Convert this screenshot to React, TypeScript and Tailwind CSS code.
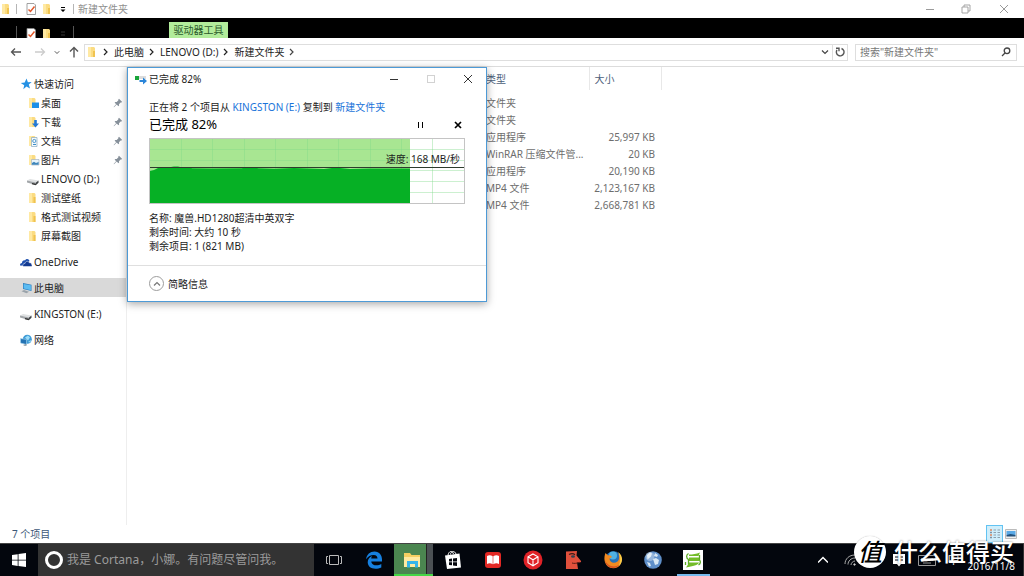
import type { ReactNode } from 'react'

const quickAccess = [
  { label: '桌面', icon: 'desktop', pinned: true },
  { label: '下载', icon: 'download', pinned: true },
  { label: '文档', icon: 'document', pinned: true },
  { label: '图片', icon: 'picture', pinned: true },
  { label: 'LENOVO (D:)', icon: 'drive', pinned: false },
  { label: '测试壁纸', icon: 'folder', pinned: false },
  { label: '格式测试视频', icon: 'folder', pinned: false },
  { label: '屏幕截图', icon: 'folder', pinned: false },
]

const places = [
  { label: 'OneDrive', icon: 'cloud', active: false },
  { label: '此电脑', icon: 'pc', active: true },
  { label: 'KINGSTON (E:)', icon: 'drive', active: false },
  { label: '网络', icon: 'network', active: false },
]

const files = [
  { type: '文件夹', size: '' },
  { type: '文件夹', size: '' },
  { type: '应用程序', size: '25,997 KB' },
  { type: 'WinRAR 压缩文件管...', size: '20 KB' },
  { type: '应用程序', size: '20,190 KB' },
  { type: 'MP4 文件', size: '2,123,167 KB' },
  { type: 'MP4 文件', size: '2,668,781 KB' },
]

const crumbs = ['此电脑', 'LENOVO (D:)', '新建文件夹']

function Folder() {
  return (
    <svg viewBox="0 0 12 12" className="h-3 w-3 shrink-0">
      <path d="M2 1h6l1 1v9H2z" fill="#fbdc82" />
      <path d="M2 1h3v10H2z" fill="#ffe9a3" />
      <path d="M7 5h2v6H7z" fill="#f0c350" />
    </svg>
  )
}

function CheckPage() {
  return (
    <svg viewBox="0 0 12 12" className="h-3 w-3 shrink-0">
      <path d="M2 .5h7l1.500 1.500v9.500H2z" fill="#fff" stroke="#8a8a8a" strokeWidth=".8" />
      <path d="M3.500 6.500l2 2 4-5" fill="none" stroke="#e2582a" strokeWidth="1.500" />
    </svg>
  )
}

function Chevron({ className = 'h-2 w-2', d = 'M2 1l3 3-3 3' }: { className?: string; d?: string }) {
  return (
    <svg viewBox="0 0 8 8" className={`shrink-0 ${className}`} fill="none" stroke="currentColor" strokeWidth="1.200">
      <path d={d} />
    </svg>
  )
}

function Pin() {
  return (
    <svg viewBox="0 0 10 10" className="h-2.5 w-2.5 shrink-0" fill="#87919b">
      <path d="M6 .8L9.200 4l-1 .6-.6-.1L6 6.200l.1 1.300-.7.8-1.700-1.700L1 9.300l-.4-.3 2.500-2.800L1.600 4.500l.8-.6 1.300.1L5.400 2.300l-.1-.8z" />
    </svg>
  )
}

function PlaceIcon({ name }: { name: string }) {
  const overlay: Record<string, ReactNode> = {
    desktop: <path d="M5 5.500h7V11H5z" fill="#1c8fe8" />,
    download: <path d="M7.200 4h2.600v3.500H12L8.500 11.500 5 7.500h2.200z" fill="#2379d6" />,
    document: (
      <g>
        <path d="M4.500 2.500H10v9H4.500z" fill="#f5fafd" stroke="#8aa9bf" strokeWidth=".7" />
        <circle cx="7.300" cy="6" r="1.600" fill="none" stroke="#3d8fc9" strokeWidth=".9" />
        <path d="M6 9.500h3" stroke="#3d8fc9" />
      </g>
    ),
    picture: (
      <g>
        <path d="M4.500 5.500H12V11H4.500z" fill="#e8f4fb" stroke="#9ab" strokeWidth=".6" />
        <path d="M5 9l2-1.200L9 9l2.600-1v2.700H5z" fill="#3f86ba" />
      </g>
    ),
  }
  return (
    <svg viewBox="0 0 12 12" className="h-3 w-3 shrink-0 overflow-visible">
      {(name === 'folder' || overlay[name]) && (
        <g>
          <path d="M2 1h5.500l1 1v9H2z" fill="#fbdc82" />
          <path d="M2 1h3v10H2z" fill="#ffe9a3" />
        </g>
      )}
      {name === 'folder' && <path d="M6.500 5h2v6h-2z" fill="#f0c350" />}
      {overlay[name]}
      {name === 'star' && <path d="M6.500.5l1.400 3.700 3.800-.2-2.900 2.600 1.200 4-3.500-2-3.200 2.600.9-4L.8 5l3.900-.6z" fill="#2591e4" />}
      {name === 'drive' && (
        <g>
          <path d="M0 7.500l3-1.500 8.500 1.500L9 9.500z" fill="#dfe1e2" />
          <path d="M0 7.500l9 2V12L0 9.500z" fill="#a2a6a9" />
          <path d="M9 9.500l2.500-2v2.300L9 12z" fill="#3e4245" />
          <path d="M5 10.600l4 .9" stroke="#333" strokeWidth="1.300" />
        </g>
      )}
      {name === 'cloud' && (
        <g>
          <path d="M0 9.500C-.2 7.800 1 7 2 7c0-1.800 1.500-3 3-2.600C6 2.200 9 2.400 9.500 5L5 9.800z" fill="#1d4fae" />
          <path d="M3.200 10.500C2 9 3.500 7.200 5 7.500 5.300 5 8.400 4.500 9.400 6.800c1.500-.3 2.200.6 2.100 1.500 1 .5.700 2.200-.3 2.200z" fill="#123a91" stroke="#fff" strokeWidth=".5" />
        </g>
      )}
      {name === 'pc' && (
        <g>
          <path d="M3 1l8.500 1.700V9L3 7z" fill="#2d7fc0" />
          <path d="M3.700 1.900l7.200 1.400v4.900L3.700 6.500z" fill="#5cbcf2" />
          <path d="M1.500 9.300l2.500-1.200 5 1.600-2.500 1.500z" fill="#9aa3aa" />
        </g>
      )}
      {name === 'network' && (
        <g>
          <circle cx="7.300" cy="5.200" r="4.500" fill="#3e9bd6" />
          <path d="M5 3.500l3-2 2 2-2 3zM8 8l3-2-.5 2.500z" fill="#9bdcf8" />
          <path d="M.5 4.500l6 1v5l-6-1.500z" fill="#2473b4" stroke="#a9d7ef" strokeWidth=".6" />
          <path d="M3 11l3-1 1 1.200-2 .8z" fill="#8c98a1" />
        </g>
      )}
    </svg>
  )
}

function TitleBar() {
  return (
    <header>
      <div className="flex h-[18px] items-center bg-white text-[#8f8f8f]">
        <Folder />
        <span className="ml-1 h-2.5 w-px bg-[#b5b5b5]" />
        <div className="ml-2 flex items-center gap-1">
          <CheckPage />
          <Folder />
        </div>
        <svg viewBox="0 0 8 8" className="ml-1.5 h-2 w-2 text-black">
          <path d="M2 2h4v1H2zM1.500 4.500h5L4 7z" fill="currentColor" />
        </svg>
        <span className="mr-1 ml-1.5 h-2.5 w-px bg-[#b5b5b5]" />
        <h1>新建文件夹</h1>
        <div className="ml-auto flex">
          <button aria-label="最小化" className="flex h-[18px] w-9 items-center justify-center">
            <span className="h-px w-2 bg-[#9b9b9b]" />
          </button>
          <button aria-label="还原" className="flex h-[18px] w-9 items-center justify-center">
            <svg viewBox="0 0 10 10" className="h-2.5 w-2.5" fill="none" stroke="#9b9b9b" strokeWidth=".9">
              <path d="M1 3h6v6H1zM3 3V1h6v6H7" />
            </svg>
          </button>
          <button aria-label="关闭" className="flex h-[18px] w-10 items-center justify-center">
            <svg viewBox="0 0 10 10" className="h-2.5 w-2.5" stroke="#8d8d8d" strokeWidth=".9">
              <path d="M1 1l8 8M9 1L1 9" />
            </svg>
          </button>
        </div>
      </div>
      <div className="flex h-5 items-end overflow-hidden bg-black">
        <span className="ml-4 h-3 w-px bg-[#555]" />
        <div className="ml-2 flex h-2.5 gap-1">
          <CheckPage />
          <Folder />
        </div>
        <svg viewBox="0 0 8 8" className="ml-1.5 h-2 w-2">
          <path d="M2 2h4M2 5h4" stroke="#333" />
        </svg>
        <span className="ml-1.5 h-3 w-px bg-[#555]" />
        <button className="ml-[95px] h-4 w-[59px] bg-[#b2ec9b] text-[#2c5a2c]">驱动器工具</button>
      </div>
    </header>
  )
}

function AddressBar() {
  return (
    <nav className="flex h-[29px] items-center border-b border-[#dcdcdc] bg-white pr-[7px] pl-2.5 text-[#444]">
      <button aria-label="后退">
        <svg viewBox="0 0 12 12" className="h-3 w-3" fill="none" stroke="#555" strokeWidth="1.300">
          <path d="M11 6H1.500M5 2.500L1.500 6 5 9.500" />
        </svg>
      </button>
      <button aria-label="前进" className="ml-3">
        <svg viewBox="0 0 12 12" className="h-3 w-3" fill="none" stroke="#ccc" strokeWidth="1.300">
          <path d="M1 6h9.500M7 2.500L10.500 6 7 9.500" />
        </svg>
      </button>
      <button aria-label="最近浏览的位置" className="ml-2">
        <Chevron className="h-1.5 w-1.5" d="M1 3l3 3 3-3" />
      </button>
      <button aria-label="上移" className="ml-2">
        <svg viewBox="0 0 12 12" className="h-3 w-3" fill="none" stroke="#555" strokeWidth="1.400">
          <path d="M6 11.500V1.500M2 5.500l4-4 4 4" />
        </svg>
      </button>
      <div className="ml-1 flex h-[17px] flex-1 items-center border border-[#dedede] pl-px">
        <Folder />
        <ol className="flex items-center text-[#222]">
          {crumbs.map((crumb) => (
            <li key={crumb} className="flex items-center">
              <Chevron className="mx-1 h-2 w-2" />
              <a href="#">{crumb}</a>
            </li>
          ))}
        </ol>
        <Chevron className="mx-1 h-2 w-2" />
        <button aria-label="历史记录" className="mr-[3px] ml-auto">
          <Chevron className="h-2 w-2" d="M1 2.500l3 3 3-3" />
        </button>
        <button aria-label="刷新" className="flex h-full w-[15px] items-center justify-center border-l border-[#dedede]">
          <svg viewBox="0 0 10 10" className="h-2.5 w-2.5" fill="none" stroke="#555" strokeWidth="1.400">
            <path d="M6.500 1.500a3.800 3.800 0 1 1-4.500 1.500M1 1.200h3v3" />
          </svg>
        </button>
      </div>
      <label className="ml-[7px] flex h-[17px] w-[162px] items-center border border-[#dedede] px-1">
        <input
          aria-label="搜索"
          placeholder='搜索"新建文件夹"'
          className="min-w-0 flex-1 bg-transparent outline-none placeholder:text-[#777]"
        />
        <svg viewBox="0 0 10 10" className="mr-px h-2.5 w-2.5" fill="none" stroke="#444" strokeWidth="1.300">
          <circle cx="6" cy="3.800" r="2.800" />
          <path d="M4 6L1 9" />
        </svg>
      </label>
    </nav>
  )
}

function Sidebar() {
  return (
    <aside className="w-[127px] shrink-0 border-r border-[#eee] pt-[7px] text-[#222]">
      <a href="#" className="flex h-[19px] items-center gap-0.5 pl-5">
        <PlaceIcon name="star" />
        快速访问
      </a>
      <ul>
        {quickAccess.map((item) => (
          <li key={item.label}>
            <a href="#" className="flex h-[19px] items-center gap-0.5 pr-[3px] pl-[27px]">
              <PlaceIcon name={item.icon} />
              <span className="flex-1">{item.label}</span>
              {item.pinned && <Pin />}
            </a>
          </li>
        ))}
      </ul>
      <ul className="mt-[7px] flex flex-col gap-[7px]">
        {places.map((item) => (
          <li key={item.label}>
            <a href="#" className={`flex h-[19px] items-center gap-0.5 pl-5 ${item.active ? 'bg-[#d9d9d9]' : ''}`}>
              <PlaceIcon name={item.icon} />
              {item.label}
            </a>
          </li>
        ))}
      </ul>
    </aside>
  )
}

function FileTable() {
  return (
    <div className="flex-1">
      <table className="table-fixed border-collapse text-[#6d6d6d]">
        <colgroup>
          <col className="w-[354px]" />
          <col className="w-[108px]" />
          <col className="w-[72px]" />
        </colgroup>
        <thead>
          <tr className="h-[23px] text-left text-[#4c607a]">
            <td />
            <th className="border-r border-[#e8e8e8] pl-[5px] font-normal">类型</th>
            <th className="border-r border-[#e8e8e8] pl-[5px] font-normal">大小</th>
          </tr>
        </thead>
        <tbody>
          <tr className="h-1">
            <td colSpan={3} />
          </tr>
          {files.map((file, index) => (
            <tr key={index} className="h-[17px]">
              <td />
              <td className="pl-[5px] whitespace-nowrap">{file.type}</td>
              <td className="pr-1.5 text-right whitespace-nowrap">{file.size}</td>
            </tr>
          ))}
        </tbody>
      </table>
    </div>
  )
}

function SpeedChart() {
  return (
    <div className="relative mt-[5px] h-[66px] w-full border border-[#c4c4c4]">
      <svg viewBox="0 0 314 64" preserveAspectRatio="none" className="block h-full w-full">
        <path d="M0 0h260v64H0z" fill="#a8e692" />
        <path
          d="M31.500 0v64M62.500 0v64M94.500 0v64M125.500 0v64M157.500 0v64M188.500 0v64M220.500 0v64M251.500 0v64M282.500 0v64M0 10.500h314M0 21.500h314M0 31.500h314M0 42.500h314M0 53.500h314"
          stroke="#7fd98a"
          strokeOpacity=".4"
        />
        <path
          d="M0 32l4-1 4-2 10-.5 6-1h4l4 1h8l2 .8 20 .2 30-.2 3-1h10l3 1 16 .4 20-.6 30 1 8-1h8l10 1 20-.5H260V64H0z"
          fill="#06b025"
        />
        <path d="M0 28.500h314" stroke="#2d3b2d" strokeWidth="1" />
      </svg>
      <span className="absolute top-3 right-1 leading-4">速度: 168 MB/秒</span>
    </div>
  )
}

function CopyDialog() {
  return (
    <section
      role="dialog"
      aria-label="已完成 82%"
      className="absolute top-[67px] left-[127px] w-[360px] border border-[#4d9ad6] bg-white text-[#1c1c1c] shadow-[0_2px_8px_rgba(0,0,0,0.35)]"
    >
      <div className="flex h-[22px] items-center pl-1.5">
        <svg viewBox="0 0 14 12" className="h-3 w-3.5">
          <path d="M1 3h4v4H1z" fill="#19a53a" />
          <path d="M5 3h7v3H5z" fill="#dcdcdc" />
          <path d="M5.500 7h3.500V4.500L13 8l-4 3.500V9H5.500z" fill="#2b86d9" />
        </svg>
        <span className="ml-px">已完成 82%</span>
        <div className="ml-auto flex text-[#333]">
          <button aria-label="最小化" className="flex h-[22px] w-[37px] items-center justify-center">
            <span className="h-px w-2 bg-[#333]" />
          </button>
          <button aria-label="最大化" disabled className="flex h-[22px] w-[37px] items-center justify-center">
            <span className="h-2 w-2 border border-[#d2d2d2]" />
          </button>
          <button aria-label="关闭" className="flex h-[22px] w-[37px] items-center justify-center">
            <svg viewBox="0 0 10 10" className="h-2.5 w-2.5" stroke="currentColor">
              <path d="M1 1l8 8M9 1L1 9" />
            </svg>
          </button>
        </div>
      </div>
      <div className="px-[21px] pt-[9px]">
        <p className="leading-4">
          正在将 2 个项目从{' '}
          <a href="#" className="text-[#1a73d9]">
            KINGSTON (E:)
          </a>{' '}
          复制到{' '}
          <a href="#" className="text-[#1a73d9]">
            新建文件夹
          </a>
        </p>
        <div className="flex items-center">
          <h2 className="text-[13px] leading-[18px] text-black">已完成 82%</h2>
          <div className="ml-auto flex gap-[26px] pt-0.5 pr-px">
            <button aria-label="暂停" className="flex h-4 w-3 items-center justify-center gap-[3px]">
              <span className="h-1.5 w-px bg-black" />
              <span className="h-1.5 w-px bg-black" />
            </button>
            <button aria-label="取消" className="flex h-4 w-3 items-center justify-center">
              <svg viewBox="0 0 8 8" className="h-2 w-2" stroke="#000" strokeWidth="1.700">
                <path d="M1 1l6 6M7 1L1 7" />
              </svg>
            </button>
          </div>
        </div>
        <SpeedChart />
        <ul className="mt-[7px] leading-[14px]">
          <li>名称: 魔兽.HD1280超清中英双字</li>
          <li>剩余时间: 大约 10 秒</li>
          <li>剩余项目: 1 (821 MB)</li>
        </ul>
      </div>
      <div className="mt-3 flex h-9 items-center border-t border-[#dfdfdf] px-[21px]">
        <button className="flex items-center gap-1">
          <span className="flex h-[15px] w-[15px] items-center justify-center rounded-full border border-[#9d9d9d] text-[#777]">
            <Chevron className="h-2 w-2" d="M1 5.500l3-3 3 3" />
          </span>
          简略信息
        </button>
      </div>
    </section>
  )
}

function StatusBar() {
  return (
    <footer className="flex h-[18px] items-center pl-3 text-[#3c5878]">
      <span>7 个项目</span>
      <div className="ml-auto flex items-center">
        <button aria-label="详细信息" className="flex h-[18px] w-[17px] items-center justify-center border border-[#62c3f2] bg-[#cfeefb]">
          <svg viewBox="0 0 12 12" className="h-3 w-3">
            <path d="M1 2h2M1 7h2" stroke="#e0875c" strokeWidth="1.500" />
            <path d="M1 4.500h2M1 9.500h2" stroke="#7d93a5" strokeWidth="1.500" />
            <path d="M4.500 2H7M4.500 4.500H7M4.500 7H7M4.500 9.500H7M8.500 2H11M8.500 4.500H11M8.500 7H11M8.500 9.500H11" stroke="#8da0ad" />
          </svg>
        </button>
        <button aria-label="大缩略图" className="mr-[7px] ml-0.5">
          <svg viewBox="0 0 12 10" className="h-2.5 w-3">
            <path d="M.5.500h11v9H.5z" fill="#eee" stroke="#bbb" />
            <path d="M1.500 2h9v4h-9z" fill="#5aa9e6" />
            <path d="M1.500 6l4-1 5 1v1.500h-9z" fill="#22507b" />
          </svg>
        </button>
      </div>
    </footer>
  )
}

const apps: { label: string; art: ReactNode }[] = [
  {
    label: '应用商店',
    art: (
      <g>
        <path d="M2 5.500l14.500-2L18 17.500 4 19z" fill="#fff" />
        <path d="M5 5C6 1 9 0 10.500 4M7.500 4.500c0-3.500 4.500-4 5.500-.5" fill="none" stroke="#fff" strokeWidth="1" />
        <path d="M6 9l3-.4v3H6zM10 8.500l4-.5v3.500h-4zM6 12.300h3v3l-3-.3zM10 12.300h4V16l-4-.5z" fill="#05070e" />
      </g>
    ),
  },
  {
    label: '阅读',
    art: (
      <g>
        <rect x="2" y="2" width="16" height="16" rx="3" fill="#e32824" />
        <path d="M4 6c2-1 4-.8 5.700.3v8C8 13.200 6 13 4 14zM16 6c-2-1-4-.8-5.700.3v8C12 13.200 14 13 16 14z" fill="#fff" />
      </g>
    ),
  },
  {
    label: '立方体',
    art: (
      <g>
        <circle cx="10" cy="10" r="9.500" fill="#e02227" />
        <path d="M10 4l5 2.800v6L10 15.800l-5-3v-6zM5 6.800l5 3 5-3M10 9.800v6" fill="none" stroke="#fff" strokeWidth="1.100" />
      </g>
    ),
  },
  {
    label: '播放器',
    art: (
      <g>
        <path d="M3 1.500l11-.5-.5 4.500L18 11c.5 1-.5 1.500-4 1.500L15 19H3z" fill="#e0503c" />
        <path d="M6 4.500c2-1 4.500-1 6 .2" fill="none" stroke="#3a1b18" strokeWidth="1.200" />
        <ellipse cx="10" cy="6.500" rx="2" ry="1.200" fill="#35404e" />
        <path d="M9 13c2 .8 5 .3 7.500-.7" fill="none" stroke="#571e17" />
      </g>
    ),
  },
  {
    label: 'Firefox',
    art: (
      <g>
        <circle cx="10.500" cy="9.500" r="8.300" fill="#2771b9" />
        <circle cx="10" cy="5.500" r="4" fill="#50b2e4" />
        <path d="M2.500 3L5 5.500c1.500-.5 3 .2 4 1.500L6.500 8.500c0 4 4.500 5.500 8 3 2-1.500 2-5 1-8 4 3.500 4 10.500-.5 13.500-5.500 3-12.500.5-13.500-7C1.200 7.500 1.700 5 2.500 3z" fill="#f28a21" />
        <path d="M15 2c5 3 5.500 10 1 14 1.500-5 1.500-10-1-14z" fill="#fcc944" />
        <path d="M2 10c2 6 9 8 14 5-3 5-13 4-14-5z" fill="#d95021" />
      </g>
    ),
  },
  {
    label: '浏览器',
    art: (
      <g>
        <circle cx="10" cy="10" r="8.800" fill="#5f8fc9" />
        <path d="M4 5l3-2.500 2 1-1 3-3.500 3zM12 3l3 2-1 2-3-1zM10 9l3-1 3 2-1 4-3 1zM4 12l3 1 1 3-2 .5z" fill="#d9e8f4" />
        <circle cx="7" cy="6.500" r="4.500" fill="#fff" fillOpacity=".35" />
      </g>
    ),
  },
]

const taskButton = 'flex h-full w-10 items-center justify-center'

function Taskbar() {
  return (
    <footer className="relative flex h-[33px] items-stretch border-t border-[#444] bg-[#03060d] text-white">
      <button aria-label="开始" className="flex h-full w-[38px] items-center justify-center">
        <svg viewBox="0 0 14 14" className="h-3.5 w-3.5" fill="#fff">
          <path d="M0 2l5.700-.8v5.500H0zM6.500 1L14 0v6.700H6.500zM0 7.400h5.700v5.500L0 12.100zM6.500 7.400H14V14l-7.500-1z" />
        </svg>
      </button>
      <label className="flex h-full w-[276px] items-center gap-1 bg-[#333] pl-[7px]">
        <span className="h-[18px] w-[18px] rounded-full border-[3px] border-white" />
        <input
          aria-label="Cortana"
          placeholder="我是 Cortana，小娜。有问题尽管问我。"
          className="min-w-0 flex-1 bg-transparent text-xs outline-none placeholder:text-[#9b9b9b]"
        />
      </label>
      <button aria-label="任务视图" className={taskButton}>
        <svg viewBox="0 0 18 12" className="h-3 w-[18px]" fill="none" stroke="#bbb">
          <path d="M4.500 1.500h9v9h-9zM3 2.500H1.500v7H3M15 2.500h1.500v7H15" />
        </svg>
      </button>
      <button aria-label="Edge" className={taskButton}>
        <svg viewBox="0 0 20 20" className="h-5 w-5">
          <path
            d="M2 9.300C2.800 4.500 6 1.500 10.500 1.500c5 0 7.500 4 7.500 8v2H7.300c.2 3 3 3.800 5.200 3.800 1.800 0 3.500-.5 4.800-1.300v3.500c-1.700.9-3.800 1.300-5.800 1.300-4.700 0-7.800-2.800-7.800-6.500 0-3 1.700-5.300 4.400-6.400-.5.700-.9 1.700-.9 2.700h6.300c0-2.300-1.200-3.700-3.700-3.700C6.500 4.900 4 6.400 2 9.300z"
            fill="#1680e0"
          />
        </svg>
      </button>
      <button aria-label="文件资源管理器" className="flex h-full w-[39px] border-b-2 border-[#45d645] bg-[#4b5054]">
        <span className="flex h-full w-[33px] items-center justify-center border-r border-[#222] bg-[#4b8650] pt-0.5 pl-1">
          <svg viewBox="0 0 18 16" className="h-4 w-[18px]">
            <path d="M1 1h6l1.500 2H17v12H1z" fill="#f5cf62" />
            <path d="M1 5h16v10H1z" fill="#ffeaa1" />
            <path d="M4 15.500V9h11v6.500h-3V12H7v3.500z" fill="#38b5e8" />
          </svg>
        </span>
      </button>
      {apps.map((app) => (
        <button key={app.label} aria-label={app.label} className={taskButton}>
          <svg viewBox="0 0 20 20" className="h-5 w-5">
            {app.art}
          </svg>
        </button>
      ))}
      <button aria-label="截图工具" className={taskButton}>
        <span className="flex h-full w-[33px] items-center justify-center border-b-2 border-[#76b9ed] pt-0.5">
          <svg viewBox="0 0 20 20" className="h-5 w-5">
            <path d="M0 0h20v20H0z" fill="#fff" />
            <path d="M6 4.500c4 0 7-.5 11-2l-1.500 3.500H6zM6 7.500h10V11H6zM6 12.500h10c-1 3-6 3.500-13 5l2-3z" fill="#73bd28" />
            <path d="M5.500 3.500C3 5 3 8 5.500 9.500v5M16.500 5v5c1.500 1.500 1 4-1 5M2.500 12v3" fill="none" stroke="#5dab25" strokeWidth="1.300" />
          </svg>
        </span>
      </button>
      <div className="ml-auto flex items-center gap-3 border-r border-[#333] pr-2">
        <button aria-label="显示隐藏的图标">
          <Chevron className="h-2.5 w-2.5" d="M0 6l4-4 4 4" />
        </button>
        <svg viewBox="0 0 12 12" className="ml-1 h-3 w-3" fill="none" stroke="#aaa">
          <path d="M1 10C1 5 5 1 11 1M4 10.500C4 7 7 4 11 4M7 11c0-2 2-4 4-4" />
          <circle cx="10.500" cy="10.500" r=".8" fill="#fff" />
        </svg>
        <svg viewBox="0 0 14 14" className="ml-6 h-3.5 w-3.5">
          <path d="M1 1h12v10H9l-2 2.500L5 11H1z" fill="#fff" />
          <path d="M3 4h8M3 7h8" stroke="#05070e" />
        </svg>
        <svg viewBox="0 0 18 11" className="h-[11px] w-[18px]" fill="none" stroke="#999">
          <path d="M.5.500h17v10H.5zM3 3.500h12M3 5.500h12" />
          <path d="M5 8h8" />
        </svg>
        <span className="text-xs">中</span>
        <time className="-ml-1 self-end pb-1 text-[10px] leading-3">2016/11/8</time>
      </div>
      <div className="absolute right-2.5 bottom-2 flex items-center gap-2 text-white">
        <span className="flex h-8 w-8 items-center justify-center rounded-full bg-white text-2xl leading-8 font-medium text-black italic shadow-[0_0_1px_rgba(0,0,0,0.35)]">
          值
        </span>
        <span className="text-2xl leading-8 font-medium [text-shadow:0_0_2px_rgba(0,0,0,0.5)]">什么值得买</span>
      </div>
    </footer>
  )
}

export default function App() {
  return (
    <div className="relative flex min-h-screen flex-col bg-white font-['Noto_Sans','Noto_Sans_CJK_SC',sans-serif] text-[10px] leading-4">
      <TitleBar />
      <AddressBar />
      <main className="flex flex-1">
        <Sidebar />
        <FileTable />
      </main>
      <StatusBar />
      <Taskbar />
      <CopyDialog />
    </div>
  )
}
